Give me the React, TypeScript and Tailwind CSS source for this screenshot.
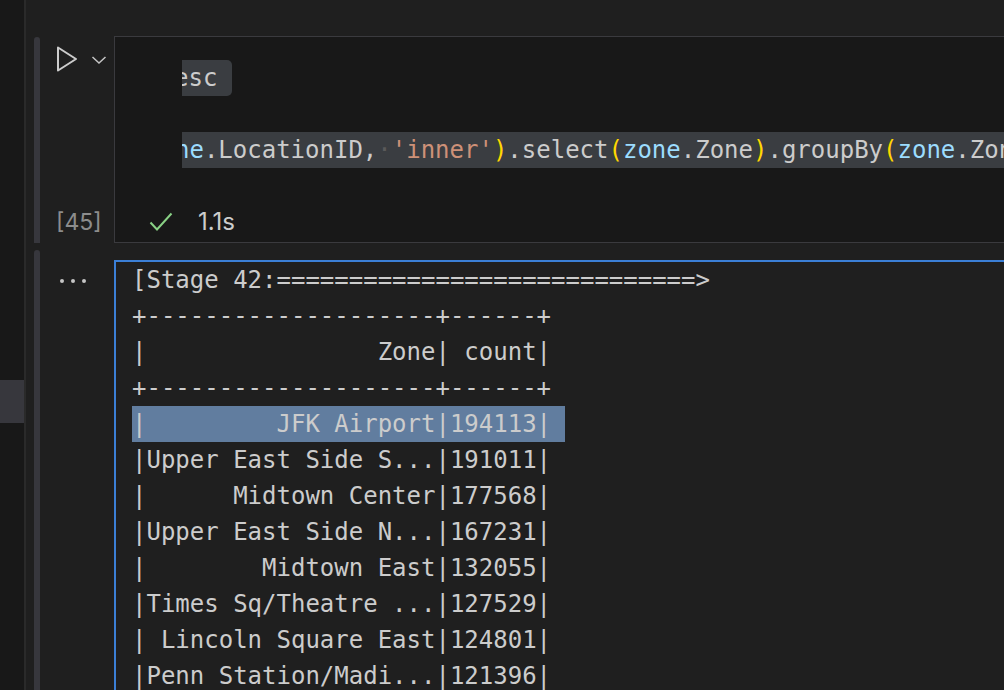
import React from "react";

const mono = { fontFamily: '"DejaVu Sans Mono", "Liberation Mono", monospace' };
const sans = { fontFamily: 'Inter, "Noto Sans", "Liberation Sans", sans-serif' };

const rows: string[] = [
  "+--------------------+------+",
  "|                Zone| count|",
  "+--------------------+------+",
];
const data: string[] = [
  "|Upper East Side S...|191011|",
  "|      Midtown Center|177568|",
  "|Upper East Side N...|167231|",
  "|        Midtown East|132055|",
  "|Times Sq/Theatre ...|127529|",
  "| Lincoln Square East|124801|",
  "|Penn Station/Madi...|121396|",
];

export default function App() {
  return (
    <div className="w-[1004px] h-[690px] overflow-hidden flex bg-[#1f1f1f]">
      {/* left strip */}
      <div className="w-[24px] shrink-0 bg-[#181818] flex flex-col">
        <div className="h-[380px]" />
        <div className="h-[43px] bg-[#37373d]" />
      </div>
      <div className="w-[2px] shrink-0 bg-[#2a2a2a]" />
      <div className="flex-1 flex flex-col pt-[36px] min-w-0">
        {/* code cell */}
        <div className="flex h-[207px] shrink-0">
          <div className="w-[8px] shrink-0" />
          <div className="w-[6px] shrink-0 rounded-t-[3px] bg-[#37373d] mt-px" />
          <div className="w-[74px] shrink-0 relative flex flex-col">
            <div className="flex items-start pt-[10px] pl-[16px]">
              <svg width="22" height="26" viewBox="0 0 22 26">
                <path d="M2 1.5 L20 13 L2 24.5 Z" fill="none" stroke="#cccccc" strokeWidth="2" strokeLinejoin="round" />
              </svg>
              <svg width="16" height="10" viewBox="0 0 16 10" className="ml-[13px] mt-[9px]">
                <path d="M1.5 2 L8 8 L14.5 2" fill="none" stroke="#c5c5c5" strokeWidth="1.5" />
              </svg>
            </div>
            <div className="mt-auto mb-[7px] pl-[16px] text-[23px] leading-[28px] text-[#8c8c8c]" style={sans}>
              [45]
            </div>
          </div>
          <div className="flex-1 min-w-0 border border-r-0 border-[#3a3a3e] bg-[#181818] flex flex-col">
            <div className="ml-[67px] overflow-hidden pt-[23px] text-[24px] leading-[36px] text-[#cccccc] whitespace-pre" style={mono}>
              <div className="h-[36px]">
                <span className="ml-[-8px] inline-block bg-[#3a3d41] rounded-[5px]">esc </span>
              </div>
              <div className="h-[36px]" />
              <div className="h-[36px] bg-[#3a3d41]">
                <span className="ml-[-7px]">
                  <span className="text-[#9cdcfe]">ne</span>
                  <span>.LocationID,</span>
                  <span className="text-[#5a5a5a]">·</span>
                  <span className="text-[#ce9178]">'inner'</span>
                  <span className="text-[#ffd700]">)</span>
                  <span>.select</span>
                  <span className="text-[#ffd700]">(</span>
                  <span className="text-[#9cdcfe]">zone</span>
                  <span>.Zone</span>
                  <span className="text-[#ffd700]">)</span>
                  <span>.groupBy</span>
                  <span className="text-[#ffd700]">(</span>
                  <span className="text-[#9cdcfe]">zone</span>
                  <span>.Zone</span>
                  <span className="text-[#ffd700]">)</span>
                  <span>.count()</span>
                </span>
              </div>
            </div>
            <div className="mt-auto mb-[5px] flex items-center h-[30px] pl-[34px]">
              <svg width="24" height="20" viewBox="0 0 24 20">
                <path d="M1.5 10.5 L8 17.5 L22.5 1.5" fill="none" stroke="#89d185" strokeWidth="2" />
              </svg>
              <span className="ml-[25px] text-[24px] text-[#cccccc]" style={sans}>
                1.1s
              </span>
            </div>
          </div>
        </div>
        {/* output cell */}
        <div className="flex flex-1 mt-[7px] min-h-0">
          <div className="w-[8px] shrink-0" />
          <div className="w-[6px] shrink-0 rounded-t-[3px] bg-[#37373d]" />
          <div className="w-[74px] shrink-0 pt-[29px] pl-[20px]">
            <div className="flex gap-[7px]">
              <div className="w-[4px] h-[4px] rounded-full bg-[#c5c5c5]" />
              <div className="w-[4px] h-[4px] rounded-full bg-[#c5c5c5]" />
              <div className="w-[4px] h-[4px] rounded-full bg-[#c5c5c5]" />
            </div>
          </div>
          <div className="flex-1 min-w-0 mt-[10px] border-t-2 border-l-2 border-[#3b7fd6] pl-[16px] text-[24px] leading-[36px] text-[#cccccc] whitespace-pre" style={mono}>
            <div>[Stage 42:=============================&gt;</div>
            {rows.map((r, i) => (
              <div key={i}>{r}</div>
            ))}
            <div>
              <span className="inline-block w-[433px] bg-[#617d9f]">|         JFK Airport|194113|</span>
            </div>
            {data.map((r, i) => (
              <div key={i}>{r}</div>
            ))}
          </div>
        </div>
      </div>
    </div>
  );
}
